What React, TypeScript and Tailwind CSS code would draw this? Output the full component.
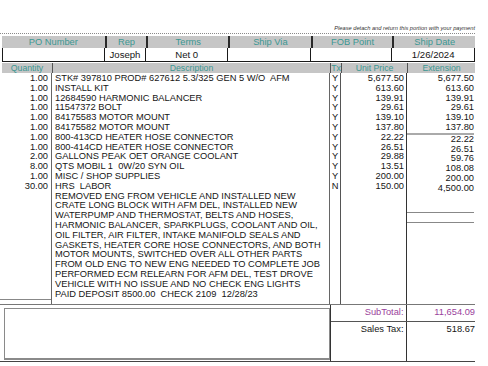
const items: [string, string, string, string, string][] = [
  ['1.00', 'STK# 397810 PROD# 627612 5.3/325 GEN 5 W/O  AFM', 'Y', '5,677.50', '5,677.50'],
  ['1.00', 'INSTALL KIT', 'Y', '613.60', '613.60'],
  ['1.00', '12684590 HARMONIC BALANCER', 'Y', '139.91', '139.91'],
  ['1.00', '11547372 BOLT', 'Y', '29.61', '29.61'],
  ['1.00', '84175583 MOTOR MOUNT', 'Y', '139.10', '139.10'],
  ['1.00', '84175582 MOTOR MOUNT', 'Y', '137.80', '137.80'],
  ['1.00', '800-413CD HEATER HOSE CONNECTOR', 'Y', '22.22', '22.22'],
  ['1.00', '800-414CD HEATER HOSE CONNECTOR', 'Y', '26.51', '26.51'],
  ['2.00', 'GALLONS PEAK OET ORANGE COOLANT', 'Y', '29.88', '59.76'],
  ['8.00', 'QTS MOBIL 1  0W/20 SYN OIL', 'Y', '13.51', '108.08'],
  ['1.00', 'MISC / SHOP SUPPLIES', 'Y', '200.00', '200.00'],
  ['30.00', 'HRS  LABOR', 'N', '150.00', '4,500.00'],
];

const notes = [
  'REMOVED ENG FROM VEHICLE AND INSTALLED NEW',
  'CRATE LONG BLOCK WITH AFM DEL, INSTALLED NEW',
  'WATERPUMP AND THERMOSTAT, BELTS AND HOSES,',
  'HARMONIC BALANCER, SPARKPLUGS, COOLANT AND OIL,',
  'OIL FILTER, AIR FILTER, INTAKE MANIFOLD SEALS AND',
  'GASKETS, HEATER CORE HOSE CONNECTORS, AND BOTH',
  'MOTOR MOUNTS, SWITCHED OVER ALL OTHER PARTS',
  'FROM OLD ENG TO NEW ENG NEEDED TO COMPLETE JOB',
  'PERFORMED ECM RELEARN FOR AFM DEL, TEST DROVE',
  'VEHICLE WITH NO ISSUE AND NO CHECK ENG LIGHTS',
  'PAID DEPOSIT 8500.00  CHECK 2109  12/28/23',
];

const head1 = [
  { label: 'PO Number', w: 'w-[103px]' },
  { label: 'Rep', w: 'w-[42px]' },
  { label: 'Terms', w: 'w-[82px]' },
  { label: 'Ship Via', w: 'w-[83px]' },
  { label: 'FOB Point', w: 'w-[82px]' },
  { label: 'Ship Date', w: 'w-[83px]' },
];

const row2 = ['', 'Joseph', 'Net 0', '', '', '1/26/2024'];

export default function App() {
  return (
    <div className="w-[488px] h-[366px] overflow-hidden bg-white text-[#151515] font-['Liberation_Sans',Arial,sans-serif]">
      <div className="w-[475px] pt-[25px]">
        <div className="h-[7px] text-right text-[5.7px] leading-[7px] italic text-[#333]">
          Please detach and return this portion with your payment
        </div>
        <div className="mt-[1px] border-t border-dotted border-[#8a8a8a]" />

        {/* header block */}
        <div className="mt-[2px] ml-[2px] flex h-[12px] bg-[#c6c6c6]">
          {head1.map((h, i) => (
            <div
              key={h.label}
              className={`${h.w} ${i === 0 ? 'w-[101px]' : 'border-l-2 border-[#2a2a2a]'} text-center text-[9.3px] leading-[12px] text-[#3b9792]`}
            >
              {h.label}
            </div>
          ))}
        </div>
        <div className="ml-[2px] flex h-[14px]">
          {row2.map((v, i) => (
            <div
              key={i}
              className={`${head1[i].w} ${i === 0 ? 'w-[101px] border-l' : ''} border-r border-b border-[#1a1a1a] text-center text-[9.6px] leading-[14px]`}
            >
              {v}
            </div>
          ))}
        </div>

        <div className="mt-[1px] ml-[2px] flex h-[10px] bg-[#c6c6c6] text-center text-[8.7px] leading-[10px] text-[#3b9792]">
          <div className="w-[50px]">Quantity</div>
          <div className="w-[278px] border-l border-[#555]">Description</div>
          <div className="w-[11px] border-l border-[#555]">Tx</div>
          <div className="w-[66px] border-l border-[#555]">Unit Price</div>
          <div className="w-[68px] border-l border-[#555]">Extension</div>
        </div>

        {/* body */}
        <div className="flex h-[231px] text-[9.3px] leading-[9.8px]">
          <div className="w-[52px] border-r border-[#666]">
            <div className="h-[227px] border-b border-[#888] pt-[1px] pr-[3px] text-right">
              {items.map((it, i) => (
                <div key={i}>{it[0]}</div>
              ))}
            </div>
          </div>
          <div className="w-[278px] border-r border-[#666] pt-[1px] pl-[3px]">
            {items.map((it, i) => (
              <div key={i} className="whitespace-pre">{it[1]}</div>
            ))}
            {notes.map((n, i) => (
              <div key={`n${i}`} className="whitespace-pre">{n}</div>
            ))}
          </div>
          <div className="w-[11px] border-r border-[#555] pt-[1px] text-center">
            {items.map((it, i) => (
              <div key={i}>{it[2]}</div>
            ))}
          </div>
          <div className="w-[66px] border-r border-[#333] pt-[1px] pr-[2px] text-right">
            {items.map((it, i) => (
              <div key={i}>{it[3]}</div>
            ))}
          </div>
          <div className="w-[68px] pt-[1px] pr-[1px] text-right">
            {items.map((it, i) => (
              <div key={i} className={i === 5 ? 'border-b-2 border-[#aaa]' : ''}>
                {it[4]}
              </div>
            ))}
            <div className="h-[18px]" />
            <div className="h-[10px] border-t border-[#888]" />
            <div className="border-t border-[#888]" />
          </div>
        </div>

        {/* totals */}
        <div className="flex h-[57px] border-t border-[#777]">
          <div className="w-[330px] pt-[3px] pl-[4px]">
            <div className="h-[52px] border border-b-2 border-[#8a8a8a]" />
          </div>
          <div className="w-[145px] border-l border-[#333] text-[9.3px]">
            <div className="flex h-[17px] border-b border-[#555] leading-[14px] text-[#9a3f9c]">
              <div className="w-[77px] border-r border-[#333] pr-[3px] text-right">SubTotal:</div>
              <div className="w-[68px] text-right">11,654.09</div>
            </div>
            <div className="flex h-[39px] leading-[14px]">
              <div className="w-[77px] border-r border-[#333] pr-[3px] text-right">Sales Tax:</div>
              <div className="w-[68px] text-right">518.67</div>
            </div>
          </div>
        </div>
        <div className="border-t border-[#444]" />
      </div>
    </div>
  );
}
